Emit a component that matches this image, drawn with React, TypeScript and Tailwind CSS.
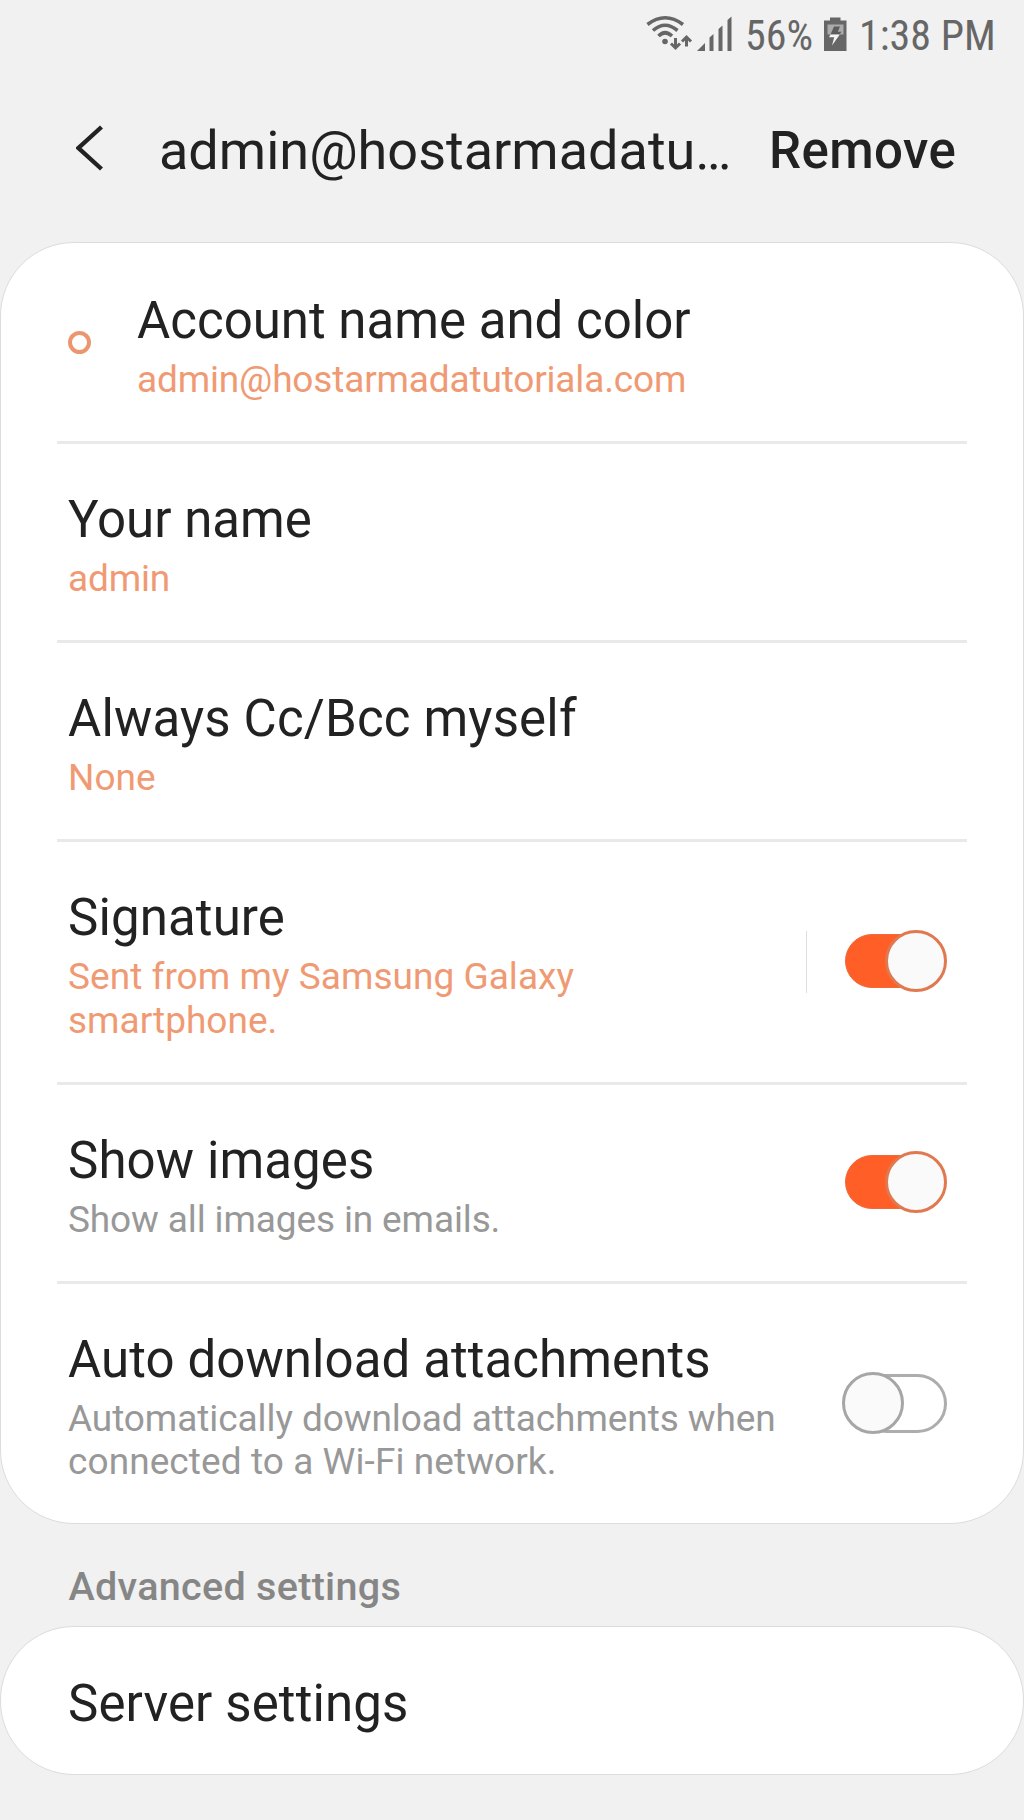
import React from 'react';

interface ToggleProps {
  checked: boolean;
}

const Toggle: React.FC<ToggleProps> = ({ checked }) => (
  <button type="button" role="switch" aria-checked={checked} className="relative mb-[8px] h-[62px] w-[105px] shrink-0">
    {checked ? (
      <>
        <span className="absolute left-[3px] top-[4px] h-[54px] w-[90px] rounded-full border border-[#ee6a3a] bg-[#ff5f26]" />
        <span className="absolute right-0 top-0 size-[62px] rounded-full border-[3px] border-[#e07850] bg-[#fafafa]" />
      </>
    ) : (
      <>
        <span className="absolute right-0 top-[2px] h-[59px] w-[90px] rounded-full border-[3px] border-[#adadad]" />
        <span className="absolute left-0 top-0 size-[62px] rounded-full border-[3px] border-[#a6a6a6] bg-[#fafafa]" />
      </>
    )}
  </button>
);

interface SettingRowProps {
  title: string;
  titleClass?: string;
  summary: { text: string; className: string }[];
  muted?: boolean;
  checked?: boolean;
  split?: boolean;
  dot?: boolean;
  last?: boolean;
}

const SettingRow: React.FC<SettingRowProps> = ({
  title,
  titleClass = '',
  summary,
  muted,
  checked,
  split,
  dot,
  last,
}) => (
  <div className={last ? 'px-[56px]' : 'mx-[56px] border-b-[3px] border-[#e9e9e9]'}>
    <div className="flex items-center pb-[39.5px] pl-[11px] pr-[20px] pt-[46px]">
      {dot && <span className="mb-[8px] mr-[46px] size-[23px] rounded-full border-4 border-[#ec9670]" />}
      <div className="flex-1 whitespace-nowrap">
        <div className={`text-[51px] leading-[60px] text-[#222222] ${titleClass}`}>{title}</div>
        <div className={`mt-[7px] text-[37px] leading-[43.5px] ${muted ? 'text-[#989898]' : 'text-[#f09a74]'}`}>
          {summary.map((line) => (
            <div key={line.text} className={line.className}>
              {line.text}
            </div>
          ))}
        </div>
      </div>
      {split && <span className="mb-[7px] mr-[35px] h-[62px] w-[1.5px] bg-[#dedede]" />}
      {checked !== undefined && <Toggle checked={checked} />}
    </div>
  </div>
);

const StatusBar: React.FC = () => (
  <div className="flex h-[70px] items-center pl-[646px] pt-px text-[42px] leading-[70px] text-[#666666]">
    {/* wifi + signal */}
    <svg width="92" height="70" viewBox="646 1 92 70" fill="none" stroke="#666666" className="shrink-0">
      <path d="M647.500 24.500Q665 11 683 24.500" strokeWidth="3.6" />
      <path d="M653 30.500Q665 20 677.500 30.500" strokeWidth="3.6" />
      <path d="M658.500 36Q665 29.500 672 36" strokeWidth="3.6" />
      <circle cx="665" cy="41.500" r="2.800" fill="#666666" stroke="none" />
      <path
        d="M675.500 38V48M671 43.500L675.500 48L680 43.500M686.500 46.500V37M682 41.500L686.500 37L691 41.500"
        strokeWidth="3"
      />
      <path
        d="M697 51L705 43V51ZM709.500 51V37.500L713.500 34V51ZM718.500 51V29L722.500 25.500V51ZM727.500 51V20L731.500 16.500V51Z"
        fill="#666666"
        stroke="none"
      />
    </svg>
    <span className="ml-[7px] w-[78px] shrink-0 font-stretch-75%">56%</span>
    {/* charging battery */}
    <svg width="24" height="70" viewBox="823 1 24 70" className="shrink-0">
      <path d="M824 20.500H830V17.500H840.500V20.500H846.500V51H824Z" fill="#666666" />
      <path d="M827.500 24.500H843.500V34.500H827.500Z" fill="#ababab" />
      <path d="M834 26.500H840L837.800 31.800H841.500L839.500 34.500H830.500Z" fill="#5c5c5c" />
      <path d="M830.500 34.500H839.800L832 45.500L834.200 37.200H829Z" fill="#f4f4f4" />
    </svg>
    <span className="ml-[12px] whitespace-nowrap font-stretch-75%">1:38 PM</span>
  </div>
);

export default function App() {
  return (
    <div className="h-[1820px] w-[1024px] overflow-hidden bg-[#f1f1f1] font-['Roboto',sans-serif]">
      <StatusBar />
      <header className="flex h-[172px] items-start pt-[38px]">
        <svg width="83" height="90" viewBox="76 108 83 90" fill="none" className="ml-[76px] shrink-0">
          <path d="M101.500 127L78.500 148L101.500 169" stroke="#222222" strokeWidth="4.4" />
        </svg>
        <h1 className="mt-[11px] w-[610px] whitespace-nowrap text-[54px] leading-[64px] text-[#222222]">
          admin@hostarmadatu…
        </h1>
        <button type="button" className="mt-[12.5px] text-[51px] font-medium leading-[60px] tracking-[0.4px] text-[#222222]">
          Remove
        </button>
      </header>

      <main>
        <section className="h-[1282px] rounded-[74px] border border-[#dcdcdc] bg-white pt-[2px]">
          <SettingRow
            title="Account name and color"
            summary={[{ text: 'admin@hostarmadatutoriala.com', className: 'tracking-[-0.16px]' }]}
            dot
          />
          <SettingRow title="Your name" summary={[{ text: 'admin', className: 'tracking-[-0.16px]' }]} />
          <SettingRow
            title="Always Cc/Bcc myself"
            titleClass="tracking-[0.16px]"
            summary={[{ text: 'None', className: '' }]}
          />
          <SettingRow
            title="Signature"
            titleClass="tracking-[0.12px]"
            summary={[
              { text: 'Sent from my Samsung Galaxy', className: 'tracking-[0.04px]' },
              { text: 'smartphone.', className: '' },
            ]}
            checked
            split
          />
          <SettingRow
            title="Show images"
            titleClass="tracking-[0.1px]"
            summary={[{ text: 'Show all images in emails.', className: 'tracking-[-0.13px]' }]}
            muted
            checked
          />
          <SettingRow
            title="Auto download attachments"
            titleClass="tracking-[0.08px]"
            summary={[
              { text: 'Automatically download attachments when', className: 'tracking-[-0.08px]' },
              { text: 'connected to a Wi-Fi network.', className: 'tracking-[0.08px]' },
            ]}
            muted
            checked={false}
            last
          />
        </section>
        <h2 className="h-[102px] pl-[68.5px] pt-[41px] text-[39.5px] font-medium leading-[44px] tracking-[0.3px] text-[#868686]">
          Advanced settings
        </h2>
        <section className="flex h-[149px] items-center rounded-[74px] border border-[#dcdcdc] bg-white pl-[67px] pt-[7px]">
          <span className="text-[51px] leading-[60px] tracking-[0.12px] text-[#222222]">Server settings</span>
        </section>
      </main>
    </div>
  );
}
